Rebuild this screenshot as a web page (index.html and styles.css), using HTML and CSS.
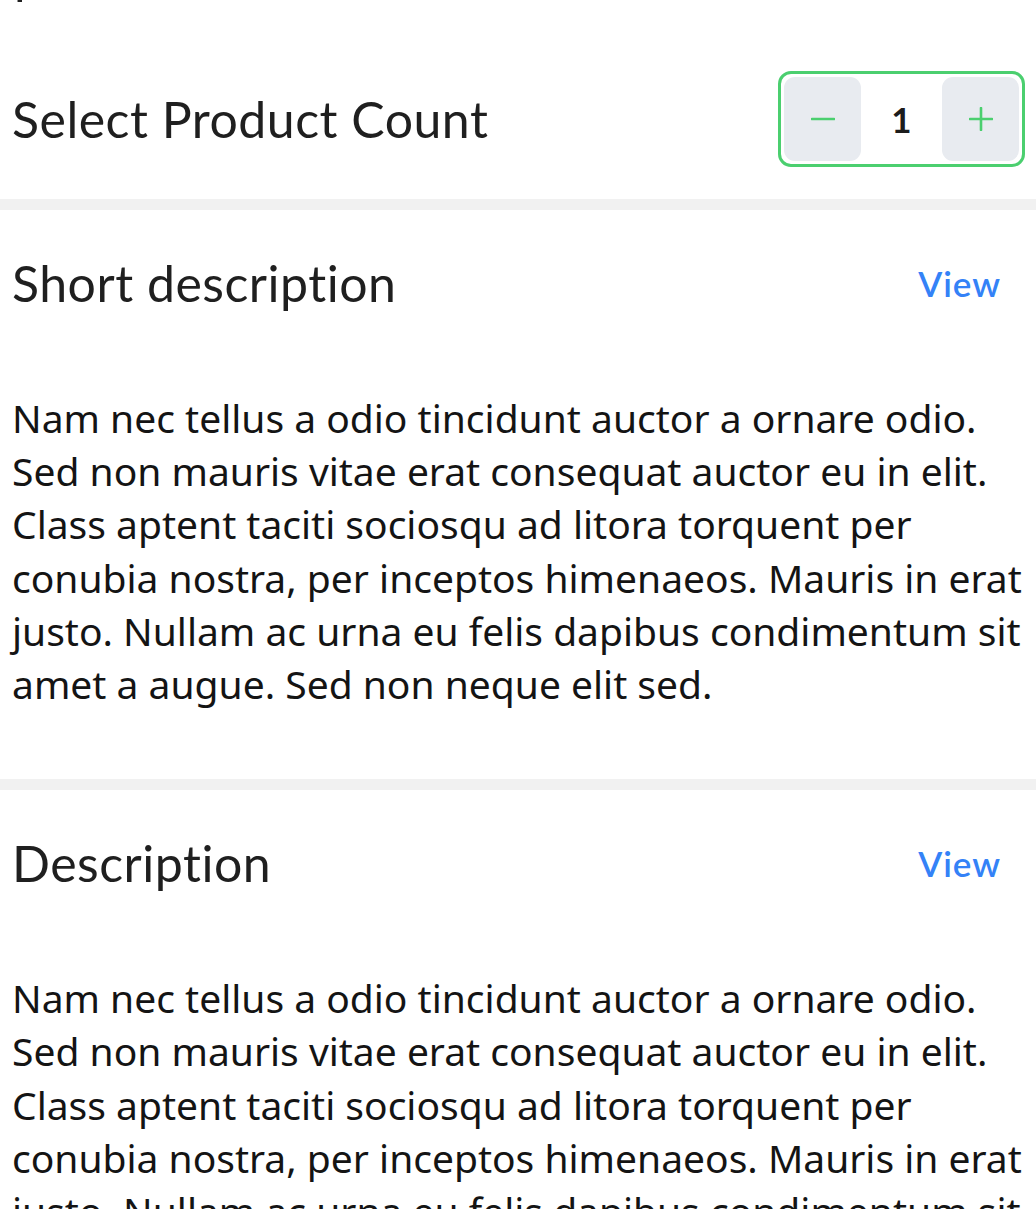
FILE: index.html
```html
<!DOCTYPE html>
<html lang="en">
<head>
<meta charset="utf-8">
<title>Product</title>
<link rel="stylesheet" href="styles.css">
</head>
<body>
<div class="page">
  <div class="peek"><span class="peek-text">p</span></div>

  <section class="count-row">
    <h2 class="title">Select Product Count</h2>
    <div class="stepper">
      <button class="step-btn" aria-label="Decrease">
        <svg width="24" height="24" viewBox="0 0 24 24"><path d="M1 12h22" stroke="#4bcf6f" stroke-width="2.6" stroke-linecap="round"/></svg>
      </button>
      <span class="step-value">1</span>
      <button class="step-btn" aria-label="Increase">
        <svg width="24" height="24" viewBox="0 0 24 24"><path d="M1 12h22M12 1v22" stroke="#4bcf6f" stroke-width="2.6" stroke-linecap="round"/></svg>
      </button>
    </div>
  </section>

  <div class="divider"></div>

  <section class="info">
    <div class="info-head">
      <h2 class="title">Short description</h2>
      <a class="view" href="#">View</a>
    </div>
    <p class="info-text">Nam nec tellus a odio tincidunt auctor a ornare odio. Sed non mauris vitae erat consequat auctor eu in elit. Class aptent taciti sociosqu ad litora torquent per conubia nostra, per inceptos himenaeos. Mauris in erat justo. Nullam ac urna eu felis dapibus condimentum sit amet a augue. Sed non neque elit sed.</p>
  </section>

  <div class="divider"></div>

  <section class="info">
    <div class="info-head">
      <h2 class="title">Description</h2>
      <a class="view" href="#">View</a>
    </div>
    <p class="info-text">Nam nec tellus a odio tincidunt auctor a ornare odio. Sed non mauris vitae erat consequat auctor eu in elit. Class aptent taciti sociosqu ad litora torquent per conubia nostra, per inceptos himenaeos. Mauris in erat justo. Nullam ac urna eu felis dapibus condimentum sit amet a augue. Sed non neque elit sed.</p>
  </section>
</div>
</body>
</html>
```

FILE: styles.css
```css
* { box-sizing: border-box; }
html, body {
  margin: 0;
  padding: 0;
  background: #ffffff;
  overflow: hidden;
}
.page {
  width: 1036px;
}
.peek {
  height: 2px;
  padding-left: 14px;
  overflow: hidden;
}
.peek-text {
  display: block;
  margin-top: -51px;
  font-family: "Lato", sans-serif;
  font-size: 50px;
  line-height: 50px;
  color: #1f1f1f;
}
.title {
  margin: 0;
  font-family: "Lato", "Noto Sans", sans-serif;
  font-weight: 400;
  font-size: 50px;
  line-height: 60px;
  color: #1f1f1f;
  letter-spacing: 0.5px;
}
.count-row {
  display: flex;
  align-items: center;
  justify-content: space-between;
  padding: 69px 11px 32px 12px;
}
.stepper {
  display: flex;
  align-items: center;
  width: 247px;
  height: 96px;
  border: 3px solid #4bcf6f;
  border-radius: 13px;
  padding: 3px;
}
.step-btn {
  width: 77px;
  height: 84px;
  border: none;
  border-radius: 11px;
  background: #e8ebf0;
  display: flex;
  align-items: center;
  justify-content: center;
  padding: 0;
}
.step-value {
  flex: 1;
  text-align: center;
  font-family: "Lato", sans-serif;
  font-weight: 700;
  font-size: 35px;
  color: #1c1c1c;
}
.divider {
  height: 11px;
  background: #f1f1f1;
}
.info {
  padding: 43px 0 0 12px;
}
.info-head {
  display: flex;
  align-items: center;
  justify-content: space-between;
  height: 60px;
}
.view {
  font-family: "Lato", sans-serif;
  font-weight: 600;
  font-size: 35px;
  letter-spacing: 1px;
  color: #3482f7;
  text-decoration: none;
  margin-right: 35px;
}
.info-text {
  margin: 78px 0 69px 0;
  font-family: "Noto Sans", "Open Sans", sans-serif;
  font-size: 39px;
  line-height: 53.2px;
  color: #141414;
}
```
